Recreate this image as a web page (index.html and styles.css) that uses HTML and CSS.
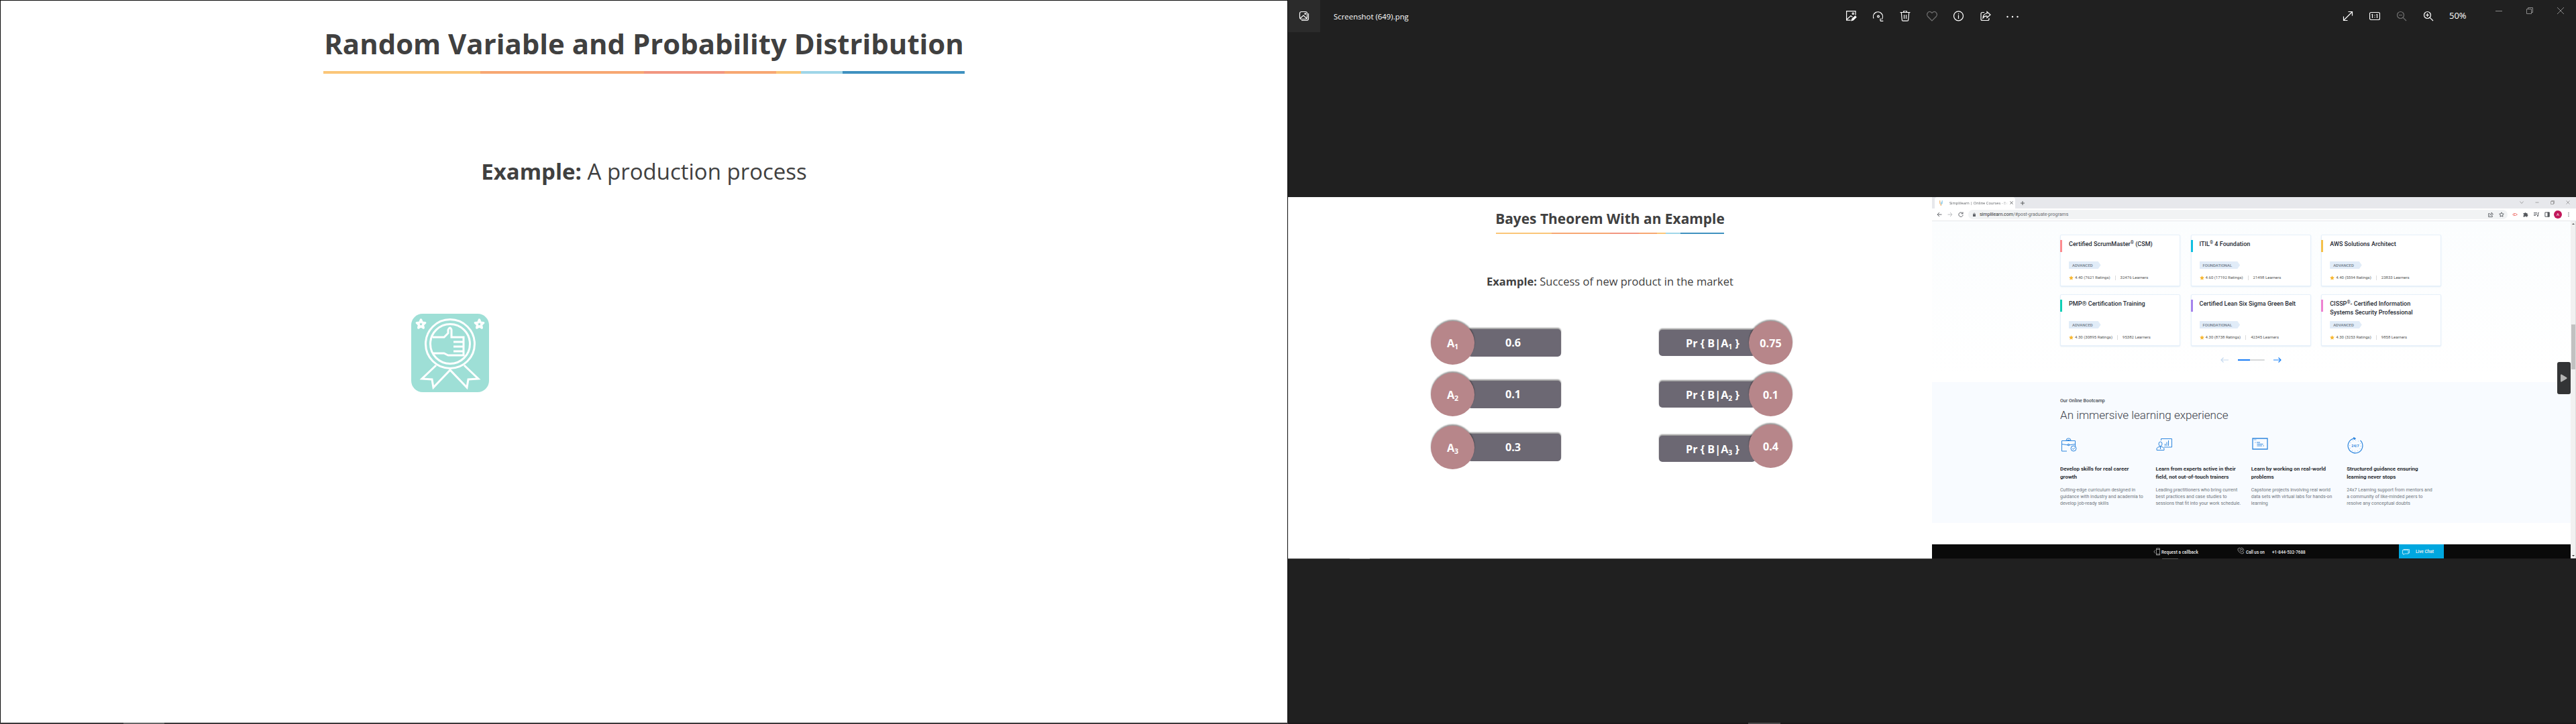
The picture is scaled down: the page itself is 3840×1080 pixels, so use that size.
FILE: index.html
```html
<!DOCTYPE html>
<html lang="en">
<head>
<meta charset="utf-8">
<title>Random Variable and Probability Distribution</title>
<link rel="stylesheet" href="styles.css">
</head>
<body>
<svg class="defs" aria-hidden="true">
  <symbol id="star" viewBox="0 0 10 10"><path d="M5 .3l1.5 3 3.3.4-2.4 2.3.6 3.4L5 7.8 2 9.4l.6-3.4L.2 3.7l3.3-.4z" fill="#f7b731"/></symbol>
</svg>
<main class="desktop">
  <section class="lesson">
    <h1 class="lesson-title">Random Variable and Probability Distribution</h1>
    <div class="rule"></div>
    <p class="lesson-example"><b>Example:</b> A production process</p>
    <svg class="badge" viewBox="0 0 116 117" fill="none" stroke="#fff" stroke-width="3">
      <rect width="116" height="117" rx="17" fill="#9edfd6" stroke="none"/>
      <path d="M37 77L16 97l15 1 2 12 25-26 25 26 2-12 15-1-21-20"/>
      <circle cx="58" cy="45" r="36.5" fill="#9edfd6"/>
      <circle cx="58" cy="45" r="29.5"/>
      <path d="M32 35h17l6-6v-5q3-6 5 0v11h18v27H55l-6-3H32M78 42H63m15 7H63m15 7H63"/>
      <path stroke-width="3.4" stroke-linejoin="round" d="M14.500 9l1.800 4.100 4.400.500-3.300 3 .9 4.400-3.800-2.200-3.800 2.200.9-4.400-3.300-3 4.400-.5zM101.500 9l1.800 4.100 4.400.5-3.300 3 .9 4.400-3.800-2.200-3.800 2.200.9-4.400-3.300-3 4.400-.5z"/>
    </svg>
    <div class="taskbar"><i></i></div>
  </section>

  <section class="viewer">
    <header class="bar">
      <div class="gallery">
        <svg viewBox="0 0 16 16" class="ic"><rect x="1.500" y="1.500" width="11" height="11" rx="2.500"/><path d="M2 11.500l5-4.500 5 4.500M14.500 4v7.500a3 3 0 0 1-3 3H4"/><circle cx="9.700" cy="4.600" r=".8"/></svg>
      </div>
      <span class="filename">Screenshot (649).png</span>
      <nav class="tools">
        <svg viewBox="0 0 16 16" class="ic"><path d="M14 6.500V.6H.6v13.500h6M1 13l6-5.500 2.500 2"/><circle cx="10.300" cy="4.300" r="1.200"/><path d="M8 14.600l1-2.500L13.500 8l1.500 1.500-4.500 4.500z" fill="#fff"/></svg>
        <svg viewBox="0 0 16 16" class="ic"><path d="M1 11.500A7 7 0 1 1 13 13M11 15.300h4.300M11 15.300V11.500"/><circle cx="8" cy="8.500" r="1.400"/></svg>
        <svg viewBox="0 0 16 16" class="ic"><path d="M.5 2.500h15M5.500 2.300a2.500 2.500 0 0 1 5 0M2.300 2.500l1 11.200a1.500 1.500 0 0 0 1.500 1.500h6.400a1.500 1.500 0 0 0 1.500-1.500l1-11.200M6.500 6v6M9.500 6v6"/></svg>
        <svg viewBox="0 0 16 16" class="ic dim"><path d="M8 15L1.600 8.500C-1 5 2.500-.2 6.500 2.100L8 3.500l1.500-1.400c4-2.300 7.500 2.900 4.900 6.400z"/></svg>
        <svg viewBox="0 0 16 16" class="ic"><circle cx="7.500" cy="7.800" r="7"/><path d="M7.500 6.500V12M7.500 4v1.200"/></svg>
        <svg viewBox="0 0 16 16" class="ic"><path d="M6 2.500H3A2 2 0 0 0 1 4.500v8a2 2 0 0 0 2 2h8a2 2 0 0 0 2-2V11M10 1.500l5 4.500-5 4.500V8Q6 7.500 4 11 4 4.500 10 4z"/></svg>
        <svg viewBox="0 0 20 16" class="ic more"><circle cx="2.500" cy="9" r="1.200"/><circle cx="10" cy="9" r="1.200"/><circle cx="17.500" cy="9" r="1.200"/></svg>
      </nav>
      <nav class="zoomers">
        <svg viewBox="0 0 16 16" class="ic"><path d="M1.500 14.500l13-13M8.500 1.500h6v6M1.500 8.500v6h6"/></svg>
        <svg viewBox="0 0 16 16" class="ic"><rect x=".5" y="2.500" width="15" height="11" rx="2"/><path d="M3.500 6l1-.5V11M10.500 6l1-.5V11M8 6.300v1M8 9.300v1"/></svg>
        <svg viewBox="0 0 16 16" class="ic dim"><circle cx="6.500" cy="6.500" r="5"/><path d="M10.300 10.300l4.700 4.700M4 6.500h5"/></svg>
        <svg viewBox="0 0 16 16" class="ic"><circle cx="6.500" cy="6.500" r="5"/><path d="M10.300 10.300l4.700 4.700M4 6.500h5M6.500 4v5"/></svg>
      </nav>
      <span class="percent">50%</span>
      <nav class="winbtns">
        <svg viewBox="0 0 10 10"><path d="M0 5.500h10"/></svg>
        <svg viewBox="0 0 10 10"><path d="M.5 2.500h7v7h-7zM2.500 2.500v-2h7v7h-2"/></svg>
        <svg viewBox="0 0 10 10"><path d="M0 0l10 10M10 0L0 10"/></svg>
      </nav>
    </header>

    <div class="photo">
      <section class="bayes">
        <h2 class="bayes-title">Bayes Theorem With an Example</h2>
        <div class="rule small"></div>
        <p class="bayes-example"><b>Example:</b> Success of new product in the market</p>
        <div class="pairs">
          <div class="col">
            <div class="pair"><span class="disc">A<sub>1</sub></span><span class="slab">0.6</span></div>
            <div class="pair"><span class="disc">A<sub>2</sub></span><span class="slab">0.1</span></div>
            <div class="pair last"><span class="disc">A<sub>3</sub></span><span class="slab">0.3</span></div>
          </div>
          <div class="col right">
            <div class="pair"><span class="slab">Pr { B|A<sub>1</sub> }</span><span class="disc">0.75</span></div>
            <div class="pair"><span class="slab">Pr { B|A<sub>2</sub> }</span><span class="disc">0.1</span></div>
            <div class="pair last"><span class="slab">Pr { B|A<sub>3</sub> }</span><span class="disc">0.4</span></div>
          </div>
        </div>
        <div class="photo-task"><i></i></div>
      </section>

      <section class="browser">
        <div class="tabs">
          <div class="tab">
            <svg class="fav" viewBox="0 0 5 8"><path d="M.7 0v4q0 1.500 1.600 1.500V8" stroke="#f5b971" fill="none" stroke-width="1.200"/><path d="M4.200 0v4q0 1.500-1.400 1.500V2" stroke="#7cc3e8" fill="none"/></svg>
            <span class="tab-name">Simplilearn | Online Courses - Bo</span>
            <svg class="tab-x" viewBox="0 0 5 5"><path d="M.5.5l4 4M4.500.5l-4 4"/></svg>
          </div>
          <svg class="plus" viewBox="0 0 6 6"><path d="M3 0v6M0 3h6"/></svg>
          <div class="chrome-win">
            <svg viewBox="0 0 6 6"><path d="M.5 1.500L3 4.500l2.500-3"/></svg>
            <svg viewBox="0 0 6 6"><path d="M.5 3h5"/></svg>
            <svg viewBox="0 0 6 6"><path d="M.5 1.500h4v4h-4zM1.500 1.500V.5h4v4h-1"/></svg>
            <svg viewBox="0 0 6 6"><path d="M.5.5l5 5M5.500.5l-5 5"/></svg>
          </div>
        </div>
        <div class="addr">
          <svg class="nav-ic" viewBox="0 0 8 8"><path d="M7.500 4H1M4 1L1 4l3 3"/></svg>
          <svg class="nav-ic pale" viewBox="0 0 8 8"><path d="M.5 4H7M4 1l3 3-3 3"/></svg>
          <svg class="nav-ic" viewBox="0 0 8 8"><path d="M6.800 2.500A3.200 3.200 0 1 0 7.200 4.500M7 .3v2.500H4.500"/></svg>
          <div class="omni">
            <svg class="lock" viewBox="0 0 4 6"><path d="M0 2.500h4V6H0z" fill="#5f6368"/><path d="M.9 3V1.500q1.100-1.500 2.200 0V3" fill="none" stroke="#5f6368" stroke-width=".7"/></svg>
            <span class="url"><b>simplilearn.com</b>/#post-graduate-programs</span>
            <svg class="nav-ic share" viewBox="0 0 8 8"><path d="M2.500 2.500H.7v5h5.600V6M2.500 5.500Q3 3 5 3V1l2.500 2.500L5 5.500V4.200"/></svg>
            <svg class="nav-ic" viewBox="0 0 8 8"><path d="M4 .8l1 2.100 2.300.3-1.700 1.600.4 2.300-2-1.100-2 1.100.4-2.300L.7 3.200 3 2.900z"/></svg>
          </div>
          <svg class="ext" viewBox="0 0 8 8"><path d="M.5 4L3 2v4zM3 2.500h2L7.500 4 5 5.500H3" fill="none" stroke="#f07f7a" stroke-width=".9"/></svg>
          <svg class="ext" viewBox="0 0 8 8"><path d="M.5 2h2a1 1 0 0 1 2 0h2v2a1 1 0 0 1 0 2v1.500H4.600a1 1 0 0 0-2 0H.5V5.500a1 1 0 0 0 0-2z" fill="#55585d"/></svg>
          <svg class="ext" viewBox="0 0 8 8"><path d="M0 1.500h5M0 3.500h5M0 5.500h3M6.500 6V1.500H8" fill="none" stroke="#55585d" stroke-width=".9"/><circle cx="5.800" cy="6" r="1" fill="#55585d"/></svg>
          <svg class="ext" viewBox="0 0 8 8"><path d="M.9.9h6.200v6.200H.9z" fill="none" stroke="#55585d"/><path d="M4.500.5h3v7h-3z" fill="#55585d"/></svg>
          <span class="avatar">A</span>
          <svg class="kebab" viewBox="0 0 2 8"><path d="M.4 1h1.200v1.200H.4zM.4 3.400h1.200v1.200H.4zM.4 5.800h1.200V7H.4z" fill="#55585d"/></svg>
        </div>
        <div class="view">
          <div class="page">
            <div class="courses">
              <article class="card coral"><h3>Certified ScrumMaster<sup>®</sup> (CSM)</h3><span class="tag">ADVANCED</span><p><svg><use href="#star"/></svg>4.40 (7621 Ratings)<i></i>32476 Learners</p></article>
              <article class="card cyan"><h3>ITIL<sup>®</sup> 4 Foundation</h3><span class="tag">FOUNDATIONAL</span><p><svg><use href="#star"/></svg>4.60 (17192 Ratings)<i></i>21498 Learners</p></article>
              <article class="card gold"><h3>AWS Solutions Architect</h3><span class="tag">ADVANCED</span><p><svg><use href="#star"/></svg>4.40 (5594 Ratings)<i></i>23833 Learners</p></article>
              <article class="card teal"><h3>PMP<span class="reg">®</span> Certification Training</h3><span class="tag">ADVANCED</span><p><svg><use href="#star"/></svg>4.30 (30895 Ratings)<i></i>95382 Learners</p></article>
              <article class="card violet"><h3>Certified Lean Six Sigma Green Belt</h3><span class="tag">FOUNDATIONAL</span><p><svg><use href="#star"/></svg>4.30 (8738 Ratings)<i></i>42345 Learners</p></article>
              <article class="card pink"><h3>CISSP<sup>®</sup>- Certified Information Systems Security Professional</h3><span class="tag">ADVANCED</span><p><svg><use href="#star"/></svg>4.30 (3253 Ratings)<i></i>9858 Learners</p></article>
            </div>
            <div class="pager">
              <svg viewBox="0 0 12 8"><path d="M12 4H1M4.500.5L1 4l3.500 3.500" stroke="#c5d9ee"/></svg>
              <div class="track"><i></i></div>
              <svg viewBox="0 0 12 8"><path d="M0 4h11M7.500.5L11 4 7.500 7.500" stroke="#1a82f7"/></svg>
            </div>
            <div class="bootcamp">
              <div class="eyebrow">Our Online Bootcamp</div>
              <h2>An immersive learning experience</h2>
              <div class="features">
                <div class="feature">
                  <svg viewBox="0 0 26 26"><path d="M10 22H2.500V6.500h20V15M2.500 11.500q10 3 20 0M9 6q.5-3 2.500-3h2q2 0 2.500 3M10.500 5.500h4"/><circle cx="12.500" cy="12.500" r="1.300"/><circle cx="20" cy="18" r="4"/><path d="M18 18l1.500 1.500 2.500-3"/></svg>
                  <h4>Develop skills for real career growth</h4><p>Cutting-edge curriculum designed in guidance with industry and academia to develop job-ready skills</p>
                </div>
                <div class="feature">
                  <svg viewBox="0 0 26 26"><path d="M8.500 6V3.500h16v12.500H13M14.500 14v-3M17 14V8.500M19.500 14V6M2 20.500v-2.500q0-2 5.500-3 5.500 1 5.500 3v2.500zM7.500 15v4"/><ellipse cx="7.500" cy="11.200" rx="2.500" ry="3.200"/></svg>
                  <h4>Learn from experts active in their field, not out-of-touch trainers</h4><p>Leading practitioners who bring current best practices and case studies to sessions that fit into your work schedule.</p>
                </div>
                <div class="feature">
                  <svg viewBox="0 0 26 26"><path stroke-width="1.300" d="M2 3h22v16H2z"/><path d="M3.500 5h4" opacity=".6"/><path d="M5.500 9h1M8 9h5M8.500 11.500h9M8.500 14h7.500M17.500 14h1.500"/></svg>
                  <h4>Learn by working on real-world problems</h4><p>Capstone projects involving real world data sets with virtual labs for hands-on learning</p>
                </div>
                <div class="feature">
                  <svg viewBox="0 0 26 26"><path stroke-width="1.200" d="M20.500 6A10.900 10.900 0 1 1 11 3.200"/><path d="M10.500 1.500l3 1.500-2 2z" fill="#2e86de"/><circle cx="13" cy="14" r="8.300" stroke-dasharray=".8 3.550" opacity=".7"/><text x="13" y="16">24/7</text></svg>
                  <h4>Structured guidance ensuring learning never stops</h4><p>24x7 Learning support from mentors and a community of like-minded peers to resolve any conceptual doubts</p>
                </div>
              </div>
            </div>
            <footer class="contact">
              <svg class="phone" viewBox="0 0 10 12"><path d="M4.500 1h5v10h-5zM3 3.500L.8 6 3 8.500M4.500 2.500h5M4.500 9.500h5"/></svg>
              <span class="cb">Request a callback</span>
              <svg class="call" viewBox="0 0 11 11"><path d="M1 2.500Q0 5 3.500 8t5.500 1.500l.8-1.500-2-1.500-1.300.8q-2-1-2.500-2.800l1-1-1.300-2.300zM5.500 1q4.200.3 4.500 4.500M5.500 3q2.300.2 2.500 2.500"/></svg>
              <span class="us">Call us on</span><span class="num">+1-844-532-7688</span>
              <div class="chat"><svg viewBox="0 0 11 9"><path d="M.5 1.500h8.500v5.500H3.500L2 8.500V7H.5zM2 1.500V.5h8.500V6H9"/></svg><span>Live Chat</span></div>
            </footer>
          </div>
          <div class="scroll"><span class="up"></span><div class="thumb"></div><span class="down"></span></div>
          <div class="drawer"><svg viewBox="0 0 10 12"><path d="M0 1.500Q0 0 1.500.5L9 5q1.200 1 0 2L1.500 11.500Q0 12 0 10.500z" fill="#b4b4b4"/></svg></div>
        </div>
        <div class="photo-task web"><i></i></div>
      </section>
    </div>
    <div class="taskbar dark"><i></i></div>
  </section>
</main>
</body>
</html>
```
FILE: styles.css
```css
* { box-sizing: border-box; margin: 0; padding: 0; }
body { background: #202020; font-family: "Open Sans", "Noto Sans", sans-serif; }
svg { display: block; flex: none; }
.defs { position: absolute; width: 0; height: 0; }
.desktop { display: flex; width: 3840px; height: 1080px; overflow: hidden; }

/* lesson slide */
.lesson { width: 1920px; height: 1080px; display: flex; flex-direction: column; align-items: center; background: #fff; border: 1px solid #0c0c0c; border-bottom: 0; padding-top: 36px; color: #404040; }
.lesson-title { font-size: 41.9px; line-height: 56px; font-weight: 700; white-space: nowrap; }
.rule { width: 956px; height: 4px; margin-top: 13px; background: linear-gradient(90deg, #fbc678 24.5%, #f7a772 24.5% 50%, #f29680 50% 62.600%, #f7a772 62.600% 70.600%, #fbc678 70.600% 74.500%, #9fd6e8 74.500% 81%, #3f91c0 81%); }
.lesson-example { margin-top: 124px; font-size: 33px; line-height: 44px; white-space: nowrap; }
.badge { width: 116px; height: 117px; margin: 190px 0 0 612px; align-self: flex-start; }
.taskbar { align-self: stretch; height: 2px; margin: auto -1px 0; padding-left: 184px; background: #3b393a; }
.taskbar i { display: block; width: 61px; height: 2px; background: #666; }
.taskbar.dark { margin: auto 0 0; padding-left: 686px; background: #1b1819; }
.taskbar.dark i { width: 48px; background: #4c4a4b; }

/* photo viewer */
.viewer { width: 1920px; height: 1080px; display: flex; flex-direction: column; background: #202020; }
.bar { display: flex; height: 48px; margin-bottom: 246px; color: #fff; }
.gallery { width: 48px; height: 48px; background: #2b2b2b; display: flex; align-items: center; justify-content: center; }
.ic { width: 16px; height: 16px; fill: none; stroke: #fff; stroke-width: 1.2; }
.ic.dim { stroke: #707070; }
.ic.more { width: 20px; fill: #fff; stroke: none; }
.filename { width: 772px; padding-left: 20px; font-size: 11.4px; line-height: 49px; white-space: nowrap; }
.tools, .zoomers { display: flex; align-items: center; }
.tools { width: 740px; }
.tools .ic, .zoomers .ic { margin: 0 12px; }
.tools .ic.more { margin: 0 10px; }
.percent { width: 69px; padding-left: 11px; font-size: 13px; line-height: 46px; }
.winbtns { display: flex; gap: 36px; padding: 11px 0 0 11px; }
.winbtns svg { width: 10px; height: 10px; fill: none; stroke: #8a8a8a; }
.photo { display: flex; width: 1920px; height: 540px; }

/* Bayes slide */
.bayes { width: 960px; display: flex; flex-direction: column; align-items: center; background: #fff; padding-top: 18px; color: #404040; }
.bayes-title { font-size: 20.95px; line-height: 28px; font-weight: 700; white-space: nowrap; }
.rule.small { width: 340px; height: 2px; margin-top: 7px; }
.bayes-example { margin-top: 60px; font-size: 16.5px; line-height: 22px; white-space: nowrap; }
.pairs { display: flex; align-self: stretch; padding-left: 213px; margin-top: 48px; gap: 146px; }
.col { width: 194px; }
.col.right { width: 199px; }
.pair { display: flex; align-items: center; height: 65px; margin-bottom: 12px; color: #fff; font-size: 16.2px; font-weight: 700; line-height: 24px; white-space: nowrap; }
.pair.last { margin-top: 14px; }
.right .pair.last { margin-top: 0; }
.disc { position: relative; z-index: 1; width: 65px; height: 65px; flex: none; border-radius: 50%; background: #b7868a; box-shadow: 0 -2px 2px rgba(0,0,0,.4); text-align: center; line-height: 66px; }
.slab { flex: 1; height: 41px; margin-left: -10px; border-radius: 5px; background: #6c6873; box-shadow: 0 -2px 2px rgba(0,0,0,.4); text-align: center; line-height: 40px; padding-right: 4px; }
.right .slab { height: 39px; margin: 0 -10px 0 0; padding: 0 0 0 16px; }
.right .last .slab { transform: translateY(4px); }
.pair sub { font-size: 10.5px; line-height: 0; vertical-align: -3px; }
.photo-task { align-self: stretch; height: 1px; margin-top: auto; padding-left: 92px; background: #5a5a5a; }
.photo-task i { display: block; width: 30px; height: 1px; background: #8a8a8a; }
.photo-task.web { padding-left: 343px; background: #1d1b1c; }
.photo-task.web i { width: 24px; background: #555; }

/* browser window */
.browser { width: 960px; display: flex; flex-direction: column; background: #fff; font-family: Roboto, sans-serif; }
.tabs { display: flex; height: 17px; background: #e7e8ec; padding-left: 4px; align-items: center; }
.tab { display: flex; align-items: center; width: 120px; height: 17px; background: #fff; border-radius: 4px 4px 0 0; padding-left: 7px; }
.fav { width: 5px; height: 8px; }
.tab-name { width: 88px; margin: 0 2px 0 10px; font: 5.7px/16px "Open Sans", sans-serif; color: #606367; white-space: nowrap; overflow: hidden; -webkit-mask-image: linear-gradient(90deg, #000 85%, transparent); mask-image: linear-gradient(90deg, #000 85%, transparent); }
.tab-x, .plus { width: 5px; height: 5px; fill: none; stroke: #4d5054; stroke-width: .9; }
.plus { width: 6px; height: 6px; margin-left: 8px; }
.chrome-win { display: flex; gap: 17px; margin: 0 9px 2px auto; }
.chrome-win svg { width: 6px; height: 6px; fill: none; stroke: #888; stroke-width: .7; }
.addr { display: flex; height: 19px; align-items: center; padding: 0 9px 1px 7px; border-bottom: 1px solid #e6e8eb; }
.nav-ic { width: 8px; height: 8px; margin-right: 8px; fill: none; stroke: #55585d; stroke-width: .9; }
.pale { stroke: #b5b8bb; }
.omni { display: flex; align-items: center; width: 804px; height: 14px; margin-left: -1px; padding-left: 7px; border-radius: 7px; background: #f1f3f4; }
.omni .nav-ic:last-child { margin-right: 5px; }
.lock { width: 4px; height: 6px; }
.url { margin-left: 6px; font-size: 7px; line-height: 14px; color: #686b6f; }
.url b { font-weight: 400; color: #2c3033; }
.share { margin-left: auto; }
.ext { width: 8px; height: 8px; margin-left: 8px; }
.omni + .ext { margin-left: 7px; }
.avatar { width: 12px; height: 12px; margin-left: 6px; border-radius: 50%; background: #c2185b; color: #fff; font-size: 6px; line-height: 12px; text-align: center; }
.kebab { width: 2px; height: 8px; margin-left: 9px; }
.view { position: relative; display: flex; height: 503px; }
.page { width: 952px; background: linear-gradient(#fbfdfe, #fff 230px); display: flex; flex-direction: column; }
.courses { display: grid; grid-template-columns: repeat(3, 179px); grid-template-rows: 77px 77px; gap: 12px 15.6px; padding: 20px 0 0 191px; }
.card { position: relative; border: 1px solid #e6f0fa; border-radius: 2px; background: #fff; box-shadow: 0 1px 2px rgba(120,170,220,.22); padding: 6.500px 0 0 12px; }
.card::before { content: ""; position: absolute; left: -1px; top: 7px; width: 3px; height: 17.5px; background: var(--accent); }
.coral { --accent: #fd8a8e; } .cyan { --accent: #12bfe0; } .gold { --accent: #f4c04a; }
.teal { --accent: #10d0b5; } .violet { --accent: #a583ec; } .pink { --accent: #ee82d1; }
.card h3 { width: 150px; height: 32.5px; font-size: 9.05px; line-height: 13px; font-weight: 500; color: #272b34; }
.card sup { font-size: 6.5px; line-height: 0; vertical-align: 3px; font-weight: 400; }
.reg { font-weight: 400; }
.tag { display: block; width: max-content; height: 11px; padding: 0 12px 0 5px; background: #e1ecf8; clip-path: polygon(0 0, calc(100% - 4px) 0, 100% 50%, calc(100% - 4px) 100%, 0 100%); font-size: 5.95px; font-weight: 500; line-height: 11px; color: #707b88; }
.card p { display: flex; align-items: center; margin-top: 9px; font-size: 6.02px; line-height: 8px; color: #555; white-space: nowrap; }
.card p svg { width: 7px; height: 7px; margin-right: 2px; }
.card p i { width: 1px; height: 7px; margin: 0 7px; background: #dcdcdc; }
.pager { display: flex; align-items: center; height: 13px; margin: 14px 0 0 430px; }
.pager svg { width: 12px; height: 8px; fill: none; stroke-width: 1.2; }
.track { width: 40px; height: 2px; margin: 0 13px 0 14px; border-radius: 1px; background: #d6d8da; }
.track i { display: block; width: 18px; height: 2px; background: #1a7df5; }
.bootcamp { height: 210px; margin-top: 26.5px; padding: 23px 0 0 191px; background: #f8fbff; }
.eyebrow { font-size: 7px; line-height: 10px; font-weight: 500; color: #464b53; }
.bootcamp h2 { margin-top: 5.600px; font-size: 17.05px; line-height: 22px; font-weight: 300; color: #3c414a; }
.features { display: grid; grid-template-columns: repeat(4, 142.400px); margin-top: 21px; }
.feature svg { width: 26px; height: 26px; fill: none; stroke: #2e86de; stroke-width: 1; }
.feature text { font: 700 5.5px Roboto, sans-serif; fill: #2e86de; stroke: none; text-anchor: middle; }
.feature h4 { width: 124px; margin-top: 16.5px; font-size: 8px; line-height: 12px; font-weight: 700; color: #2c2f34; }
.feature p { width: 131px; margin-top: 8px; font-size: 7px; line-height: 10px; color: #70777e; }
.contact { display: flex; align-items: center; height: 21px; margin-top: auto; padding-left: 330px; background: #0a0a0a; color: #f0f0f0; font-size: 6.35px; font-weight: 500; line-height: 20px; white-space: nowrap; padding-top: 1px; }
.contact svg { fill: none; stroke: #aaa; stroke-width: .8; }
.phone { width: 10px; height: 12px; }
.cb { width: 115px; margin-left: 2px; padding-top: 2px; letter-spacing: .08px; }
.call { width: 11px; height: 11px; margin: -3px 2px 0 -2px; }
.us { width: 39px; padding-top: 2px; }
.num { width: 178px; padding-top: 2px; }
.chat { display: flex; align-items: center; width: 67px; height: 21px; margin: -1px 0 0 11px; padding-left: 5px; background: #00a7df; font-size: 6.500px; }
.contact .chat svg { width: 11px; height: 9px; stroke: #d4f2fc; margin: 2px 9px 0 0; }
.scroll { width: 8px; display: flex; flex-direction: column; align-items: center; background: #f1f1f1; border-right: 1px solid #ddd; padding: 3px 0; }
.thumb { width: 6px; height: 67px; margin-top: 148.5px; background: #c1c1c1; }
.up, .down { border: 2px solid transparent; border-top: 0; border-bottom: 2px solid #555; }
.down { margin-top: auto; border-top: 2px solid #333; border-bottom: 0; }
.drawer { position: absolute; right: 8px; top: 210px; width: 20px; height: 48px; border-radius: 3px; background: #333436; display: flex; align-items: center; padding-left: 5px; }
.drawer svg { width: 10px; height: 12px; }
```
